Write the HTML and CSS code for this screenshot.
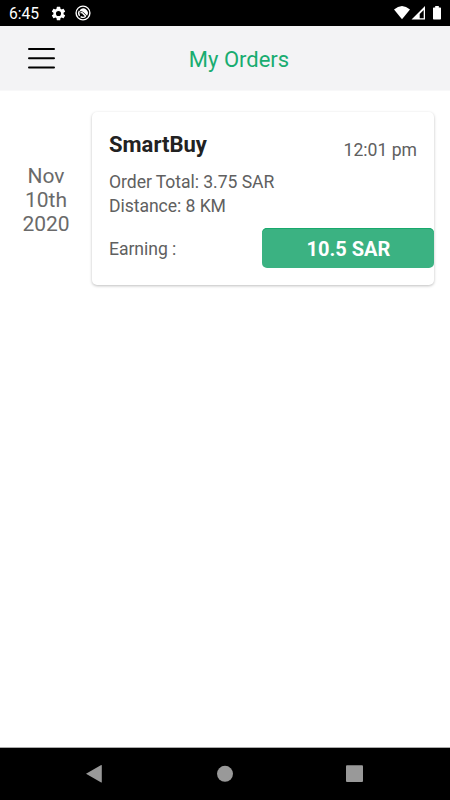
FILE: index.html
```html
<!DOCTYPE html>
<html lang="en">
<head>
<meta charset="utf-8">
<title>My Orders</title>
<link rel="stylesheet" href="styles.css">
</head>
<body>
<div class="status">
  <span class="clock">6:45</span>
  <svg class="gear" width="17" height="17" viewBox="0 0 24 24"><path fill="#fff" d="M19.14 12.94c.04-.3.06-.61.06-.94s-.02-.64-.07-.94l2.03-1.58a.5.5 0 0 0 .12-.61l-1.92-3.32a.5.5 0 0 0-.59-.22l-2.39.96a7 7 0 0 0-1.62-.94l-.36-2.54a.5.5 0 0 0-.48-.41h-3.84a.5.5 0 0 0-.47.41l-.36 2.54c-.59.24-1.13.57-1.62.94l-2.39-.96a.5.5 0 0 0-.59.22L2.74 8.87a.5.5 0 0 0 .12.61l2.03 1.58a6 6 0 0 0 0 1.88l-2.03 1.58a.5.5 0 0 0-.12.61l1.92 3.32c.12.22.37.29.59.22l2.39-.96c.5.38 1.03.7 1.62.94l.36 2.54c.05.24.24.41.48.41h3.84c.24 0 .44-.17.47-.41l.36-2.54a7 7 0 0 0 1.62-.94l2.39.96c.22.08.47 0 .59-.22l1.92-3.32a.5.5 0 0 0-.12-.61zM12 15.6a3.6 3.6 0 1 1 0-7.2 3.6 3.6 0 0 1 0 7.2z"/></svg>
  <svg class="dnd" width="16" height="16" viewBox="0 0 16 16" fill="none" stroke="#fff"><circle cx="8" cy="8" r="6.9" stroke-width="1.4"/><path d="M4.6 10.8A4.3 4.3 0 0 1 4.4 5.8M5.6 11.6A4.3 4.3 0 0 0 10.8 11.3" stroke-width="1.3"/><path d="M4.9 4.9A4.6 4.6 0 0 1 12 10.7L8.8 7.5Q6.5 5.8 4.9 6.5z" fill="#fff" stroke="none"/><path d="M5.5 8.1Q7 7 8 8.5L10.8 11.3" stroke-width="1.3"/></svg>
  <span class="grow"></span>
  <svg width="50" height="16" viewBox="0 0 50 16" fill="#fff"><path d="M0 4.6Q8-2.8 16 4.6L8 14.2z"/><path fill-rule="evenodd" d="M17.5 14.6L31 1V14.6zM25.7 13.3H29.7V5L25.7 9z"/><path d="M39 3.2Q39 2.5 39.7 2.5H41.2V1h3.6v1.5h1.5Q47 2.5 47 3.2V13.8Q47 14.5 46.3 14.5H39.7Q39 14.5 39 13.8z"/></svg>
</div>
<header class="header">
  <svg class="menu" width="28" height="24" viewBox="0 0 28 24" stroke="#000" stroke-width="2" stroke-linecap="round"><path d="M1 3h25M1 12.3h25M1 21.6h25"/></svg>
  <h1 class="title">My Orders</h1>
</header>
<main class="content">
  <div class="date">Nov<br>10th<br>2020</div>
  <section class="card">
    <div class="top"><h2 class="store">SmartBuy</h2><span class="time">12:01 pm</span></div>
    <div class="details">Order Total: 3.75 SAR<br>Distance: 8 KM</div>
    <div class="earning"><span class="label">Earning :</span><span class="amount">10.5 SAR</span></div>
  </section>
</main>
<nav class="nav">
  <svg width="450" height="52" viewBox="0 0 450 52" fill="#999"><path d="M86 25.7L101.2 17Q101.8 16.8 101.8 17.4V34Q101.8 34.8 101.2 34.4z"/><circle cx="225" cy="25.8" r="8"/><rect x="346" y="17.2" width="17" height="16.8" rx="1"/></svg>
</nav>
</body>
</html>
```

FILE: styles.css
```css
* { box-sizing: border-box; }
body {
  margin: 0;
  height: 800px;
  display: flex;
  flex-direction: column;
  background: #fff;
  color: #606060;
  font-family: Roboto, sans-serif;
  font-weight: 400;
  overflow: hidden;
}
svg { display: block; flex: none; }
.status {
  height: 26px;
  background: #000;
  color: #fff;
  display: flex;
  align-items: center;
  padding: 0 6px 0 9px;
}
.clock { width: 41px; font-size: 15.6px; line-height: 26px; padding-top: 2px; }
.dnd { margin-left: 8px; }
.grow { flex: 1; }
.header {
  height: 65px;
  padding-left: 28px;
  background: #f3f3f5;
  border-bottom: 1px solid #f8f8f9;
  display: flex;
  align-items: center;
}
.title {
  margin: 3px 0 0;
  width: 366px;
  text-align: center;
  font-size: 22px;
  line-height: 26px;
  font-weight: 400;
  color: #18ac70;
}
.content {
  flex: 1;
  display: flex;
  align-items: flex-start;
  padding-top: 21px;
}
.date {
  width: 92px;
  height: 173px;
  padding-top: 52px;
  text-align: center;
  font-size: 21px;
  line-height: 24px;
  color: #6a6a6a;
}
.card {
  width: 342.4px;
  height: 173px;
  padding: 20px 0 0 17px;
  background: #fff;
  border-radius: 5px;
  box-shadow: 0 1px 3px rgba(0, 0, 0, .26);
}
.top { display: flex; justify-content: space-between; padding-right: 17.4px; height: 38px; }
.store { margin: 0; font-size: 22px; line-height: 26px; color: #222; font-weight: 700; }
.time { font-size: 17.6px; line-height: 24px; padding-top: 6px; }
.details { font-size: 17.6px; letter-spacing: -0.06px; line-height: 24px; }
.earning {
  display: flex;
  align-items: center;
  justify-content: space-between;
  margin-top: 10px;
  font-size: 17.6px;
  line-height: 24px;
}
.label { padding-top: 2px; letter-spacing: -0.06px; }
.amount {
  width: 172px;
  height: 40px;
  border-radius: 5px;
  background: #3bb282;
  box-shadow: inset 0 1px #18a96c;
  color: #fff;
  text-align: center;
  font-size: 20px;
  line-height: 42px;
  font-weight: 700;
}
.nav { height: 53px; background: #000; border-top: 1px solid #aaa; }
```
